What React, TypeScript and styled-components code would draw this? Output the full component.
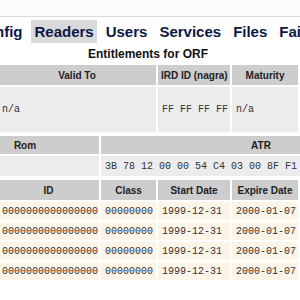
import React from 'react';
import styled, { createGlobalStyle } from 'styled-components';

const GlobalStyle = createGlobalStyle`
  html, body {
    margin: 0;
    padding: 0;
    background: #ffffff;
    overflow: hidden;
  }
`;

/* page is scrolled sideways: the stage is wider than the window */
const Viewport = styled.div`
  width: 300px;
  height: 300px;
  overflow: hidden;
  font-family: 'Liberation Sans', Arial, sans-serif;
`;

const Stage = styled.div`
  width: 560px;
  margin-left: -132px;
  display: flex;
  flex-direction: column;
  align-items: center;
`;

const TopBar = styled.div`
  height: 16px;
  background: #fbfbfb;
  border-bottom: 1px solid #dcdcdc;
`;

const Menu = styled.nav`
  align-self: stretch;
  display: flex;
  gap: 6px;
  padding: 3px 0 0 104px;
`;

const MenuItem = styled.a<{ $active?: boolean }>`
  padding: 0 3px;
  height: 23px;
  line-height: 24px;
  font-size: 15px;
  font-weight: 700;
  color: #0c1846;
  white-space: nowrap;
  background: ${(p) => (p.$active ? '#d9d9d9' : 'transparent')};
`;

const Title = styled.h1`
  margin: 4px 0 2px;
  font-size: 12px;
  line-height: 14px;
  font-weight: 700;
  color: #111111;
  text-align: center;
`;

const Table = styled.table<{ $width: number }>`
  width: ${(p) => p.$width}px;
  table-layout: fixed;
  border-collapse: separate;
  border-spacing: 2px;
  flex: none;
`;

const Th = styled.th<{ $height?: number }>`
  height: ${(p) => p.$height ?? 20}px;
  padding: 0 3px;
  background: #cdcdcd;
  color: #222222;
  font-size: 10px;
  font-weight: 700;
  text-align: center;
  white-space: nowrap;
  overflow: hidden;
`;

const Td = styled.td<{ $tone: 'gray' | 'cream'; $height: number }>`
  height: ${(p) => p.$height}px;
  padding: 0 4px;
  background: ${(p) => (p.$tone === 'gray' ? '#ececec' : '#fdf4e8')};
  color: #333333;
  font-family: 'Liberation Mono', 'Courier New', monospace;
  font-size: 10px;
  white-space: nowrap;
  overflow: hidden;
  vertical-align: middle;
`;

const menu = ['Config', 'Readers', 'Users', 'Services', 'Files', 'Failban'];

const entitlements = [
  { id: '0000000000000000', cls: '00000000', start: '1999-12-31', expire: '2000-01-07' },
  { id: '0000000000000000', cls: '00000000', start: '1999-12-31', expire: '2000-01-07' },
  { id: '0000000000000000', cls: '00000000', start: '1999-12-31', expire: '2000-01-07' },
  { id: '0000000000000000', cls: '00000000', start: '1999-12-31', expire: '2000-01-07' },
];

const App = (): JSX.Element => (
  <Viewport>
    <GlobalStyle />
    <TopBar />
    <Stage>
      <Menu>
        {menu.map((m) => (
          <MenuItem key={m} $active={m === 'Readers'}>
            {m}
          </MenuItem>
        ))}
      </Menu>

      <Title>Entitlements for ORF</Title>

      {/* card info */}
      <Table $width={304}>
        <colgroup>
          <col style={{ width: 158 }} />
          <col style={{ width: 72 }} />
          <col style={{ width: 66 }} />
        </colgroup>
        <thead>
          <tr>
            <Th>Valid To</Th>
            <Th>IRD ID (nagra)</Th>
            <Th>Maturity</Th>
          </tr>
        </thead>
        <tbody>
          <tr>
            <Td $tone="gray" $height={45}>n/a</Td>
            <Td $tone="gray" $height={45}>FF FF FF FF</Td>
            <Td $tone="gray" $height={45}>n/a</Td>
          </tr>
        </tbody>
      </Table>

      {/* rom / atr */}
      <Table $width={550}>
        <colgroup>
          <col style={{ width: 74 }} />
          <col style={{ width: 148 }} />
          <col style={{ width: 320 }} />
        </colgroup>
        <thead>
          <tr>
            <Th $height={18}>Serial</Th>
            <Th $height={18}>Rom</Th>
            <Th $height={18}>ATR</Th>
          </tr>
        </thead>
        <tbody>
          <tr>
            <Td $tone="gray" $height={20} />
            <Td $tone="gray" $height={20} />
            <Td $tone="gray" $height={20}>3B 78 12 00 00 54 C4 03 00 8F F1 90 00</Td>
          </tr>
        </tbody>
      </Table>

      {/* entitlements */}
      <Table $width={304}>
        <colgroup>
          <col style={{ width: 101 }} />
          <col style={{ width: 55 }} />
          <col style={{ width: 72 }} />
          <col style={{ width: 66 }} />
        </colgroup>
        <thead>
          <tr>
            <Th>ID</Th>
            <Th>Class</Th>
            <Th>Start Date</Th>
            <Th>Expire Date</Th>
          </tr>
        </thead>
        <tbody>
          {entitlements.map((e, i) => (
            // eslint-disable-next-line react/no-array-index-key
            <tr key={i}>
              <Td $tone="cream" $height={18}>{e.id}</Td>
              <Td $tone="cream" $height={18}>{e.cls}</Td>
              <Td $tone="cream" $height={18}>{e.start}</Td>
              <Td $tone="cream" $height={18}>{e.expire}</Td>
            </tr>
          ))}
        </tbody>
      </Table>
    </Stage>
  </Viewport>
);

export default App;
